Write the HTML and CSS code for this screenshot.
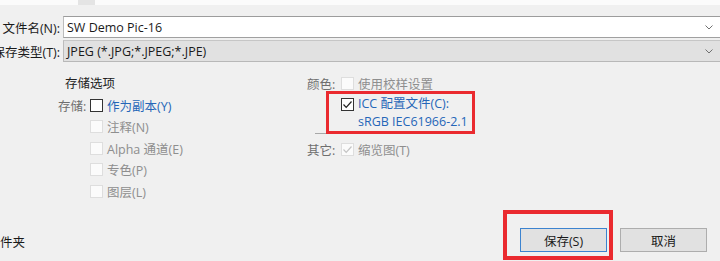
FILE: index.html
```html
<!DOCTYPE html>
<html lang="zh-CN">
<head>
  <meta charset="UTF-8" />
  <title>另存为</title>
  <link rel="stylesheet" href="styles.css">
</head>
<body>
  <div class="dialog">
    <!-- 顶部残留的文件列表边缘 -->
    <div class="topstrip">
      <span class="ts-a"></span>
      <span class="ts-gap"></span>
      <span class="ts-b"></span>
    </div>

    <!-- 文件名 / 类型 -->
    <div class="fields">
      <div class="f-label">文件名(N):</div>
      <div class="combo combo-edit">
        <span>SW Demo Pic-16</span>
        <svg class="chev" width="8" height="5" viewBox="0 0 8 5"><polyline points="0.5,0.5 4,4 7.5,0.5" fill="none" stroke="#707070" stroke-width="1"/></svg>
      </div>
      <div class="f-label">保存类型(T):</div>
      <div class="combo combo-select">
        <span>JPEG (*.JPG;*.JPEG;*.JPE)</span>
        <svg class="chev" width="8" height="5" viewBox="0 0 8 5"><polyline points="0.5,0.5 4,4 7.5,0.5" fill="none" stroke="#707070" stroke-width="1"/></svg>
      </div>
    </div>

    <!-- 存储选项 -->
    <div class="options">
      <div class="opt-col opt-left">
        <div class="opt-title">存储选项</div>
        <div class="opt-row">
          <span class="opt-label">存储:</span>
          <span class="cb"></span>
          <span class="link">作为副本(Y)</span>
        </div>
        <div class="opt-row sub"><span class="cb off"></span><span class="dim">注释(N)</span></div>
        <div class="opt-row sub"><span class="cb off"></span><span class="dim">Alpha 通道(E)</span></div>
        <div class="opt-row sub"><span class="cb off"></span><span class="dim">专色(P)</span></div>
        <div class="opt-row sub"><span class="cb off"></span><span class="dim">图层(L)</span></div>
      </div>

      <div class="opt-col opt-right">
        <div class="opt-row">
          <span class="opt-label">颜色:</span>
          <span class="cb off"></span>
          <span class="dim">使用校样设置</span>
        </div>
        <div class="icc-row">
          <span class="cb">
            <svg width="11" height="11" viewBox="0 0 11 11"><polyline points="1.5,5.5 4.2,8.3 9.5,2.5" fill="none" stroke="#222" stroke-width="1.2"/></svg>
          </span>
          <span class="link icc-text">ICC 配置文件(C):<br>sRGB IEC61966-2.1</span>
          <div class="mark mark-icc"></div>
        </div>
        <div class="sep"></div>
        <div class="opt-row">
          <span class="opt-label">其它:</span>
          <span class="cb off">
            <svg width="11" height="11" viewBox="0 0 11 11"><polyline points="1.5,5.5 4.2,8.3 9.5,2.5" fill="none" stroke="#c4c4c4" stroke-width="1.2"/></svg>
          </span>
          <span class="dim">缩览图(T)</span>
        </div>
      </div>
    </div>

    <!-- 底部按钮 -->
    <div class="footer">
      <span class="folder">文件夹</span>
      <div class="buttons">
        <button class="btn btn-default">保存(S)<span class="mark mark-save"></span></button>
        <button class="btn">取消</button>
      </div>
    </div>
  </div>
</body>
</html>
```

FILE: styles.css
```css
* {
  box-sizing: border-box;
  margin: 0;
  padding: 0;
}
html, body {
  width: 720px;
  height: 261px;
  overflow: hidden;
  background: #f0f0f0;
}
body {
  font-family: "Open Sans", "Noto Sans CJK SC", sans-serif;
  font-size: 12.5px;
  color: #1a1a1a;
}
.dialog {
  display: flex;
  flex-direction: column;
  height: 100%;
}
.topstrip {
  display: flex;
  height: 5px;
}
.ts-a {
  width: 78px;
  background: #fbfbfb;
}
.ts-gap {
  width: 17px;
  background: #e4e4e4;
}
.ts-b {
  flex: 1;
  background: #fbfbfb;
}
.fields {
  display: grid;
  grid-template-columns: 60px 1fr;
  column-gap: 3px;
  row-gap: 2px;
  margin-top: 11px;
  margin-right: -6px;
}
.f-label {
  display: flex;
  justify-content: flex-end;
  align-items: center;
  white-space: nowrap;
  height: 22px;
}
.combo {
  height: 22px;
  display: flex;
  align-items: center;
  justify-content: space-between;
  padding: 0 13px 0 3px;
  border: 1px solid #a9a9a9;
  border-right: none;
}
.combo-edit {
  background: #fff;
  border-color: #9c9c9c #bcbcbc #a0a0a0;
}
.combo-select {
  background: #e1e1e1;
  border-color: #c6c6c6 #bcbcbc #b8b8b8;
}
.chev {
  display: block;
}
.options {
  display: flex;
  margin-top: 11px;
  padding-left: 58px;
}
.opt-col {
  display: flex;
  flex-direction: column;
}
.opt-left {
  width: 249px;
}
.opt-title {
  height: 21.5px;
  line-height: 21.5px;
  margin-left: 7px;
  color: #222;
}
.opt-row {
  display: flex;
  align-items: center;
  height: 21.5px;
  white-space: nowrap;
}
.opt-row.sub {
  padding-left: 32px;
}
.opt-label {
  width: 32px;
  color: #6e6e6e;
}
.opt-right .opt-label {
  width: 34px;
}
.cb {
  width: 13px;
  height: 13px;
  border: 1px solid #333;
  background: #fff;
  margin-right: 4px;
  display: flex;
  align-items: center;
  justify-content: center;
  flex: none;
}
.cb.off {
  border-color: #dedede;
  background: #fbfbfb;
}
.link {
  color: #2566b8;
}
.dim {
  color: #8e8e8e;
}
.icc-row {
  position: relative;
  display: flex;
  align-items: flex-start;
  padding-left: 34px;
  line-height: 18px;
}
.icc-row .cb {
  margin-top: 3px;
}
.sep {
  height: 1px;
  width: 155px;
  margin: 2.5px 0 5px 8px;
  background: #a8a8a8;
}
.mark {
  position: absolute;
  border: 3px solid #ea2a2f;
  pointer-events: none;
}
.mark-icc {
  left: 19px;
  top: -3.5px;
  width: 149px;
  height: 43px;
}
.footer {
  display: flex;
  justify-content: space-between;
  align-items: flex-start;
  margin-top: 26px;
  padding-right: 13px;
}
.folder {
  margin-left: -12.5px;
  margin-top: 6px;
  line-height: 18px;
  color: #1a1a1a;
}
.buttons {
  display: flex;
  gap: 13px;
}
.btn {
  position: relative;
  width: 87px;
  height: 24px;
  font-family: inherit;
  font-size: 12.5px;
  color: #1a1a1a;
  background: #e1e1e1;
  border: 1px solid #adadad;
}
.btn-default {
  border-color: #3c83cf;
}
.mark-save {
  left: -18px;
  top: -19px;
  width: 110px;
  height: 50px;
  border-width: 4px;
}
```
